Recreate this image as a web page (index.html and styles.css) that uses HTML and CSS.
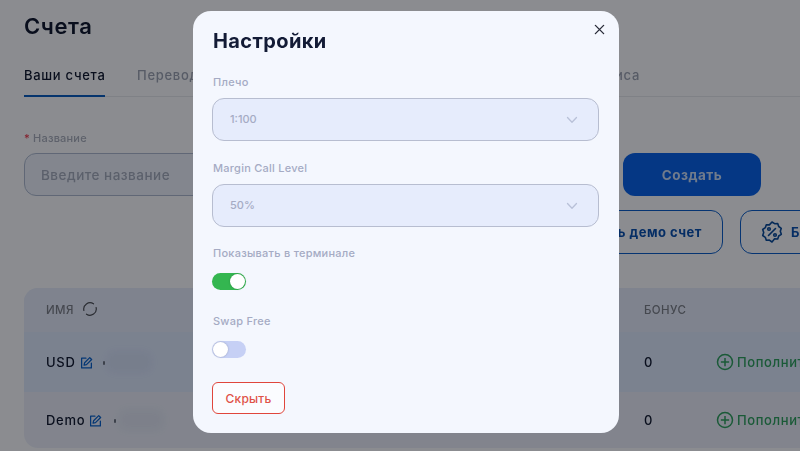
FILE: index.html
```html
<!DOCTYPE html>
<html lang="ru">
<head>
<meta charset="utf-8">
<title>Счета</title>
<link rel="stylesheet" href="styles.css">
</head>
<body>
<main class="page">
  <h1 class="page-title">Счета</h1>
  <nav class="tabs">
    <span class="tab tab-active">Ваши счета</span>
    <span class="tab">Переводы</span>
    <span class="tab">История</span>
    <span class="tab tab-last">Условия сервиса</span>
  </nav>
  <div class="field-label"><span class="req">*</span> Название</div>
  <div class="create-row">
    <div class="name-input">Введите название</div>
    <button class="create-btn">Создать</button>
  </div>
  <div class="action-row">
    <button class="outline-btn demo-btn">Создать демо счет</button>
    <button class="outline-btn bonus-btn">
      <svg class="bonus-icon" viewBox="0 0 24 24" fill="none" stroke="#0a4a9c" stroke-width="1.600" stroke-linejoin="round" stroke-linecap="round"><path d="M12 2l2.600 1.700 3.100-.2 1 3 2.600 1.800-1 3 1 3-2.600 1.700-1 3-3.100-.2L12 22l-2.600-1.900-3.100.2-1-3-2.600-1.800 1-3-1-3 2.600-1.800 1-3 3.100.2z"/><path d="M8.500 15.500l7-7"/><circle cx="9" cy="9" r="1.300"/><circle cx="15" cy="15" r="1.300"/></svg>
      Бонусы
    </button>
  </div>
  <section class="table">
    <div class="t-row t-head">
      <div class="t-name">ИМЯ
        <svg class="refresh" viewBox="0 0 16 16" fill="none" stroke="#4a4e59" stroke-width="1.200" stroke-linecap="round"><path d="M1.900 9.500A6.300 6.300 0 0 1 11.500 2.800"/><path d="M14.100 6.500A6.300 6.300 0 0 1 4.500 13.200"/></svg>
      </div>
      <div class="t-bonus">БОНУС</div>
      <div></div>
    </div>
    <div class="t-row t-item t-first">
      <div class="t-name t-strong">USD
        <svg class="edit" viewBox="0 0 24 24" fill="none" stroke="#0a62cc" stroke-width="2.300" stroke-linecap="round" stroke-linejoin="round"><path d="M11 4H3v18h18v-9"/><path d="M18 3l3.500 3.500-9.500 9.500-4.500 1 1-4.500z"/></svg>
        <span class="smudge smudge-a"></span>
        <span class="tick tick-a"></span>
      </div>
      <div class="t-num">0</div>
      <div class="t-topup"><svg class="plus" viewBox="0 0 24 24" fill="none" stroke="#2f9e62" stroke-width="2"><circle cx="12" cy="12" r="10"/><path d="M12 6.500v11M6.500 12h11"/></svg>Пополнить</div>
    </div>
    <div class="t-row t-item t-second">
      <div class="t-name t-strong">Demo
        <svg class="edit" viewBox="0 0 24 24" fill="none" stroke="#0a62cc" stroke-width="2.300" stroke-linecap="round" stroke-linejoin="round"><path d="M11 4H3v18h18v-9"/><path d="M18 3l3.500 3.500-9.500 9.500-4.500 1 1-4.500z"/></svg>
        <span class="smudge smudge-b"></span>
        <span class="tick tick-b"></span>
      </div>
      <div class="t-num">0</div>
      <div class="t-topup"><svg class="plus" viewBox="0 0 24 24" fill="none" stroke="#2f9e62" stroke-width="2"><circle cx="12" cy="12" r="10"/><path d="M12 6.500v11M6.500 12h11"/></svg>Пополнить</div>
    </div>
  </section>
</main>

<div class="overlay">
  <div class="modal">
    <button class="close" aria-label="Закрыть">
      <svg viewBox="0 0 12 12" fill="none" stroke="#2a2d3a" stroke-width="1.500" stroke-linecap="round"><path d="M1.500 1.500l9 9M10.500 1.500l-9 9"/></svg>
    </button>
    <h2 class="modal-title">Настройки</h2>
    <div class="m-label">Плечо</div>
    <div class="select">1:100
      <svg class="chev" viewBox="0 0 12 8" fill="none" stroke="#b9c1d8" stroke-width="1.300" stroke-linecap="round" stroke-linejoin="round"><path d="M1.500 1.500L6 6.200l4.500-4.700"/></svg>
    </div>
    <div class="m-label">Margin Call Level</div>
    <div class="select select-last">50%
      <svg class="chev" viewBox="0 0 12 8" fill="none" stroke="#b9c1d8" stroke-width="1.300" stroke-linecap="round" stroke-linejoin="round"><path d="M1.500 1.500L6 6.200l4.500-4.700"/></svg>
    </div>
    <div class="m-label">Показывать в терминале</div>
    <div class="switch switch-on"><span class="knob"></span></div>
    <div class="m-label">Swap Free</div>
    <div class="switch"><span class="knob"></span></div>
    <button class="hide-btn">Скрыть</button>
  </div>
</div>
</body>
</html>
```

FILE: styles.css
```css
* { box-sizing: border-box; }
html, body { margin: 0; height: 451px; overflow: hidden; }
body {
  background: #f4f7fe;
  font-family: Inter, "Noto Sans", sans-serif;
  color: #111a33;
}
button { font-family: inherit; cursor: pointer; }

.page { padding: 13px 0 0 24px; width: 800px; overflow: hidden; height: 451px; filter: blur(0.4px); }
.page-title { margin: 0; font-size: 22px; line-height: 27px; font-weight: 600; letter-spacing: 0.6px; }

.tabs { display: flex; margin-top: 21px; height: 36px; width: 776px; border-bottom: 1px solid #dfe3ec; }
.tab { font-size: 13px; line-height: 28px; color: #9aa1b4; margin-right: 32px; font-weight: 500; white-space: nowrap; letter-spacing: .7px; }
.tab-active { color: #111a33; width: 81px; margin-right: 32px; height: 36px; border-bottom: 2px solid #0a5cc0; }
.tab-last { margin-left: auto; margin-right: 160px; }

.field-label { margin-top: 33px; font-size: 11px; line-height: 16px; color: #a5abbc; font-weight: 500; letter-spacing: .2px; }
.req { color: #e8384f; }
.create-row { display: flex; gap: 19px; margin-top: 7px; }
.name-input {
  width: 580px; height: 43px; border: 1px solid #a9b6cf; border-radius: 12px;
  background: #e6ecfa; padding-left: 16px; font-size: 13.500px; line-height: 43px; color: #a1a9bd; font-weight: 500; letter-spacing: .5px;
}
.create-btn {
  width: 138px; height: 43px; border: 0; border-radius: 12px; background: #0a62e8; color: #c6d8f6;
  font-size: 13.500px; font-weight: 700; padding: 0; letter-spacing: .5px;
}

.action-row { display: flex; gap: 17px; margin-top: 14px; margin-left: 478px; }
.outline-btn {
  flex: none; height: 44px; border: 1.500px solid #0b5cc8; border-radius: 12px; background: transparent;
  color: #0a50b0; font-size: 13px; font-weight: 700; white-space: nowrap; padding: 0; display: flex; align-items: center; letter-spacing: .5px;
}
.demo-btn { width: 221px; justify-content: flex-end; padding-right: 20px; }
.bonus-btn { width: 140px; padding-left: 19px; gap: 7px; }
.bonus-icon { width: 24px; height: 24px; }

.table { width: 776px; margin-top: 34px; border-radius: 14px 0 0 14px; overflow: hidden; background: #e4e9f8; }
.t-row { display: grid; grid-template-columns: 598px 72px 1fr; align-items: center; padding-left: 22px; }
.t-head { height: 44px; background: #e0e7f9; font-size: 11.500px; color: #7a7f8c; font-weight: 500; letter-spacing: .4px; }
.t-name { display: flex; align-items: center; gap: 4px; position: relative; }
.t-head .t-name { gap: 8px; }
.t-item { font-size: 13px; color: #111a33; }
.t-first { height: 60px; background: #d8e4fc; }
.t-second { height: 56px; }
.t-strong { font-weight: 500; letter-spacing: .7px; }
.refresh { width: 16px; height: 16px; margin-top: -3px; }
.edit { width: 13px; height: 13px; }
.t-num { font-weight: 500; }
.t-topup { display: flex; align-items: center; gap: 3px; color: #2f9e62; font-weight: 500; white-space: nowrap; letter-spacing: .6px; }
.plus { width: 18px; height: 18px; flex: none; }
.smudge { position: absolute; height: 22px; border-radius: 10px; background: rgba(130,145,185,.07); filter: blur(3px); }
.smudge-a { left: 60px; width: 46px; }
.smudge-b { left: 72px; width: 46px; }
.tick { position: absolute; width: 2px; height: 4px; background: #6a7284; border-radius: 1px; }
.tick-a { left: 57px; top: 7px; }
.tick-b { left: 68px; top: 7px; }

.overlay { position: fixed; inset: 0; background: rgba(0,0,0,.43); }
.modal {
  position: absolute; left: 193px; top: 11px; width: 426px; height: 422px; border-radius: 18px;
  background: #f4f7fe; padding: 16px 19px 0;
}
.close { position: absolute; right: 14px; top: 13px; width: 11px; height: 11px; border: 0; padding: 0; background: none; display: flex; }
.close svg { width: 11px; height: 11px; }
.modal-title { margin: 0 0 19px 1px; font-size: 20px; line-height: 28px; font-weight: 700; color: #131b36; letter-spacing: .4px; filter: blur(.2px); }
.m-label { font-size: 11px; line-height: 16px; color: #a5abc4; font-weight: 500; letter-spacing: .25px; padding-left: 1px; }
.select {
  position: relative; height: 43px; width: 387px; margin: 8px 0 19px; border: 1px solid #b7bdd0; border-radius: 12px;
  background: #e6ecfc; padding-left: 17px; font-size: 11px; line-height: 41px; color: #a5abc4; font-weight: 500;
}
.select-last { margin-bottom: 18px; }
.chev { position: absolute; right: 20px; top: 17px; width: 12px; height: 8px; }
.switch { position: relative; width: 34px; height: 17px; border-radius: 9px; background: #c6d0f5; margin: 12px 0 23px; }
.switch-on { background: #34b650; }
.knob { position: absolute; left: 1px; top: 1px; width: 15px; height: 15px; border-radius: 50%; background: #fff; box-shadow: 0 0 2px rgba(0,0,0,.25); }
.switch-on .knob { left: 18px; }
.hide-btn {
  display: block; width: 73px; height: 32px; margin: 24px 0 0; border: 1px solid #e0463c; border-radius: 6px; background: #fbfcff;
  color: #e05248; font-size: 12px; font-weight: 500; padding: 0; letter-spacing: .2px;
}
```
